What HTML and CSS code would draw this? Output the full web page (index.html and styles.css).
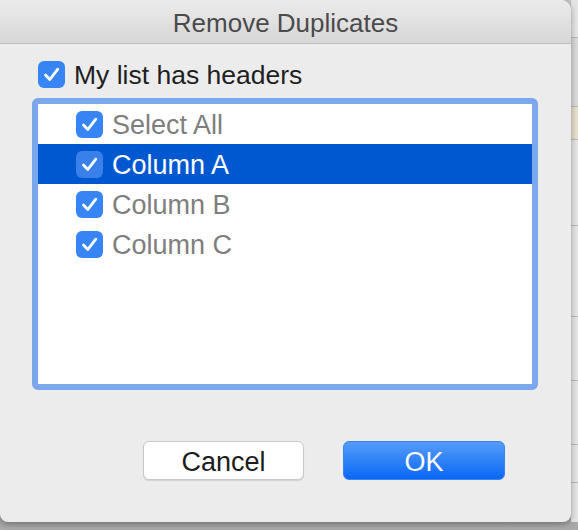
FILE: index.html
```html
<!DOCTYPE html>
<html lang="en">
<head>
	<meta charset="UTF-8">
	<title>Remove Duplicates</title>
	<link rel="stylesheet" href="styles.css">
</head>
<body>
<div class="screen">
	<div class="dialog">
		<div class="titlebar">Remove Duplicates</div>
		<div class="content">
			<label class="check headers">
				<span class="box"><svg viewBox="0 0 27 27"><path d="M7.5 14 L11.8 18.5 L19.8 8.2"/></svg></span>
				<span class="text">My list has headers</span>
			</label>
			<div class="list">
				<div class="row">
					<span class="box"><svg viewBox="0 0 27 27"><path d="M7.5 14 L11.8 18.5 L19.8 8.2"/></svg></span>
					<span class="text">Select All</span>
				</div>
				<div class="row selected">
					<span class="box"><svg viewBox="0 0 27 27"><path d="M7.5 14 L11.8 18.5 L19.8 8.2"/></svg></span>
					<span class="text">Column A</span>
				</div>
				<div class="row">
					<span class="box"><svg viewBox="0 0 27 27"><path d="M7.5 14 L11.8 18.5 L19.8 8.2"/></svg></span>
					<span class="text">Column B</span>
				</div>
				<div class="row">
					<span class="box"><svg viewBox="0 0 27 27"><path d="M7.5 14 L11.8 18.5 L19.8 8.2"/></svg></span>
					<span class="text">Column C</span>
				</div>
			</div>
			<div class="buttons">
				<button class="cancel">Cancel</button>
				<button class="ok">OK</button>
			</div>
		</div>
	</div>
	<div class="sheet">
		<div class="cell"></div>
		<div class="cell tall"></div>
		<div class="cell beige"></div>
		<div class="cell big"></div>
		<div class="cell mid"></div>
		<div class="cell low"></div>
		<div class="cell low"></div>
		<div class="cell"></div>
	</div>
</div>
</body>
</html>
```

FILE: styles.css
```css
html, body {
	margin: 0;
	height: 100%;
}

body {
	font-family: "Liberation Sans", Arial, sans-serif;
	background: linear-gradient(#c4c4c4, #a9a9a9);
	overflow: hidden;
}

.screen {
	display: flex;
	height: 522px;
}

.dialog {
	width: 571px;
	flex: none;
	background: #ececec;
	border-radius: 0 10px 8px 8px;
	box-shadow: 0 2px 6px rgba(0, 0, 0, 0.35);
	display: flex;
	flex-direction: column;
	overflow: hidden;
	position: relative;
	z-index: 1;
}

.titlebar {
	height: 43px;
	border-bottom: 1px solid #bdbdbd;
	background: linear-gradient(#ebebeb, #d7d7d7);
	color: #4b4b4b;
	font-size: 26px;
	text-align: center;
	line-height: 46px;
}

.content {
	flex: 1;
	display: flex;
	flex-direction: column;
	padding: 16px 0 0 32px;
}

.check {
	display: flex;
	align-items: center;
	gap: 9px;
	font-size: 26.5px;
	color: #1f1f1f;
	height: 28px;
	padding-left: 6px;
}

.text {
	padding-top: 2px;
}

.box {
	width: 27px;
	height: 27px;
	flex: none;
	border-radius: 6px;
	background: #3784f5;
}

.box svg {
	display: block;
	width: 27px;
	height: 27px;
}

.box path {
	fill: none;
	stroke: #fff;
	stroke-width: 2.8;
	stroke-linecap: round;
	stroke-linejoin: round;
}

.list {
	margin-top: 10px;
	width: 494px;
	height: 280px;
	border: 6px solid #7ba8ec;
	border-radius: 6px;
	background: #fff;
}

.row {
	height: 40px;
	display: flex;
	align-items: center;
	gap: 9px;
	padding-left: 38px;
	font-size: 27px;
	color: #7e7e7e;
}

.row.selected {
	background: #0058d1;
	color: #fff;
}

.row.selected .box {
	background: #3a80ea;
}

.buttons {
	display: flex;
	gap: 39px;
	margin-top: 51px;
	padding-left: 111px;
}

button {
	width: 161px;
	height: 39px;
	border-radius: 6px;
	font-family: "Liberation Sans", Arial, sans-serif;
	font-size: 27px;
	padding: 3px 0 0;
}

.cancel {
	background: #fff;
	color: #1c1c1c;
	border: 1px solid #c8c8c8;
	box-shadow: 0 1px 1px rgba(0, 0, 0, 0.12);
}

.ok {
	width: 162px;
	background: linear-gradient(#559bf9, #0b68f6);
	color: #fff;
	border: 1px solid #3b83f0;
}

.sheet {
	flex: 1;
	display: flex;
	flex-direction: column;
	background: #e4e4e4;
}

.cell {
	height: 37px;
	border-bottom: 1px solid #b9b9b9;
}

.cell.tall { height: 68px; background: #d9d9d9; }
.cell.beige { height: 32px; background: #e6dfcc; }
.cell.big { height: 85px; }
.cell.mid { height: 90px; }
.cell.low { height: 63px; }
```
